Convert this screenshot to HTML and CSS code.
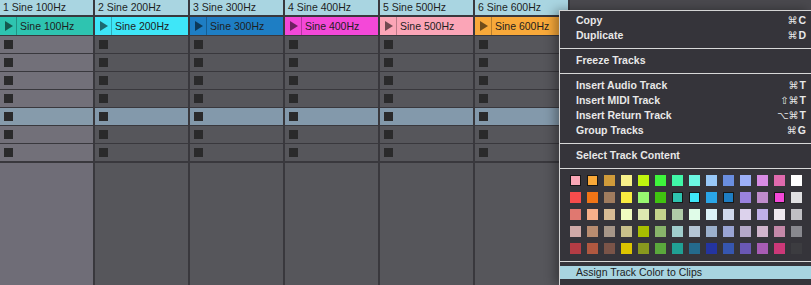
FILE: index.html
```html
<!DOCTYPE html>
<html lang="en">
<head>
    <meta charset="UTF-8">
    <title>Session View - Track Menu</title>
    <link rel="stylesheet" href="styles.css">
</head>
<body>
    <div class="session">
        <div class="track selected">
            <div class="track-head">1 Sine 100Hz</div>
            <div class="clip c-teal"><span class="play"><i></i></span><span class="clip-name">Sine 100Hz</span></div>
            <div class="slot"><b></b></div>
            <div class="slot"><b></b></div>
            <div class="slot"><b></b></div>
            <div class="slot"><b></b></div>
            <div class="slot hl"><b></b></div>
            <div class="slot"><b></b></div>
            <div class="slot last"><b></b></div>
            <div class="fill"></div>
        </div>
        <div class="track">
            <div class="track-head">2 Sine 200Hz</div>
            <div class="clip c-cyan"><span class="play"><i></i></span><span class="clip-name">Sine 200Hz</span></div>
            <div class="slot"><b></b></div>
            <div class="slot"><b></b></div>
            <div class="slot"><b></b></div>
            <div class="slot"><b></b></div>
            <div class="slot hl"><b></b></div>
            <div class="slot"><b></b></div>
            <div class="slot last"><b></b></div>
            <div class="fill"></div>
        </div>
        <div class="track">
            <div class="track-head">3 Sine 300Hz</div>
            <div class="clip c-blue"><span class="play"><i></i></span><span class="clip-name">Sine 300Hz</span></div>
            <div class="slot"><b></b></div>
            <div class="slot"><b></b></div>
            <div class="slot"><b></b></div>
            <div class="slot"><b></b></div>
            <div class="slot hl"><b></b></div>
            <div class="slot"><b></b></div>
            <div class="slot last"><b></b></div>
            <div class="fill"></div>
        </div>
        <div class="track">
            <div class="track-head">4 Sine 400Hz</div>
            <div class="clip c-magenta"><span class="play"><i></i></span><span class="clip-name">Sine 400Hz</span></div>
            <div class="slot"><b></b></div>
            <div class="slot"><b></b></div>
            <div class="slot"><b></b></div>
            <div class="slot"><b></b></div>
            <div class="slot hl"><b></b></div>
            <div class="slot"><b></b></div>
            <div class="slot last"><b></b></div>
            <div class="fill"></div>
        </div>
        <div class="track">
            <div class="track-head">5 Sine 500Hz</div>
            <div class="clip c-pink"><span class="play"><i></i></span><span class="clip-name">Sine 500Hz</span></div>
            <div class="slot"><b></b></div>
            <div class="slot"><b></b></div>
            <div class="slot"><b></b></div>
            <div class="slot"><b></b></div>
            <div class="slot hl"><b></b></div>
            <div class="slot"><b></b></div>
            <div class="slot last"><b></b></div>
            <div class="fill"></div>
        </div>
        <div class="track">
            <div class="track-head">6 Sine 600Hz</div>
            <div class="clip c-orange"><span class="play"><i></i></span><span class="clip-name">Sine 600Hz</span></div>
            <div class="slot"><b></b></div>
            <div class="slot"><b></b></div>
            <div class="slot"><b></b></div>
            <div class="slot"><b></b></div>
            <div class="slot hl"><b></b></div>
            <div class="slot"><b></b></div>
            <div class="slot last"><b></b></div>
            <div class="fill"></div>
        </div>
    </div>

    <div class="menu">
        <div class="menu-group first">
            <div class="menu-item"><span>Copy</span><span class="key"><em>⌘</em>C</span></div>
            <div class="menu-item"><span>Duplicate</span><span class="key"><em>⌘</em>D</span></div>
        </div>
        <div class="menu-group">
            <div class="menu-item"><span>Freeze Tracks</span></div>
        </div>
        <div class="menu-group">
            <div class="menu-item"><span>Insert Audio Track</span><span class="key"><em>⌘</em>T</span></div>
            <div class="menu-item"><span>Insert MIDI Track</span><span class="key"><em>⇧⌘</em>T</span></div>
            <div class="menu-item"><span>Insert Return Track</span><span class="key"><em>⌥⌘</em>T</span></div>
            <div class="menu-item"><span>Group Tracks</span><span class="key"><em>⌘</em>G</span></div>
        </div>
        <div class="menu-group">
            <div class="menu-item"><span>Select Track Content</span></div>
        </div>
        <div class="menu-group palette-group">
            <div class="palette" id="palette"></div>
        </div>
        <div class="menu-group last">
            <div class="menu-item active"><span>Assign Track Color to Clips</span></div>
        </div>
    </div>

    <script>
        const COLORS = [
            '#f9a6b5', '#f9a838', '#d09b3a', '#f7f08a', '#c0f50f', '#3ef43c', '#40f7a8', '#6cf7e3', '#98c8f8', '#6a8ee0', '#9caff8', '#d88be4', '#e06aae', '#ffffff',
            '#f84c4c', '#f27516', '#a07c5e', '#f8ec40', '#98f870', '#40c410', '#2ec4b0', '#3ee6f8', '#2aa6e8', '#1e7ec4', '#9a82e0', '#c08ccc', '#f448d8', '#e0e0e2',
            '#e07870', '#f8b08a', '#d8bc94', '#f0fcc0', '#dce8b0', '#c4d48c', '#b0cca8', '#e0fce8', '#dcf2f8', '#d0d8ec', '#dcd2ec', '#c0b0e8', '#eee8ee', '#c0c0c4',
            '#d0aaa8', '#b88c70', '#a69688', '#c8c08a', '#a8be00', '#88b46a', '#a0cccc', '#b4c4d4', '#9cb0cc', '#9aa4d4', '#b4a8c8', '#d0b4cc', '#c488a8', '#88888e',
            '#b43c44', '#b05840', '#7a5448', '#dcc400', '#88981e', '#5aa83c', '#20a094', '#246a8c', '#2434a0', '#3656b0', '#6a58b4', '#a85cb4', '#cc3878', '#3c3c40'
        ];
        // colours already used by the selected tracks get an outline
        const USED = [0, 1, 20, 21, 23, 26];

        const palette = document.getElementById('palette');
        COLORS.forEach((color, i) => {
            const swatch = document.createElement('span');
            swatch.className = USED.includes(i) ? 'swatch used' : 'swatch';
            swatch.style.background = color;
            palette.appendChild(swatch);
        });
    </script>
</body>
</html>
```

FILE: styles.css
```css
html, body {
    margin: 0;
    height: 100%;
    overflow: hidden;
}
body {
    background: #4a494e;
    font-family: 'Liberation Sans', 'DejaVu Sans', Arial, sans-serif;
    font-size: 10.5px;
    color: #202020;
}
.session {
    display: flex;
    gap: 2px;
    height: 100%;
    width: 568px;
    background: #39383d;
    border-right: 2px solid #39383d;
}
.track {
    width: 93px;
    display: flex;
    flex-direction: column;
}
.track-head {
    height: 15px;
    line-height: 15px;
    padding-left: 3px;
    margin-bottom: 2px;
    background: #a9d5e1;
    color: #1e1e1e;
    white-space: nowrap;
}
.clip {
    height: 18px;
    margin-bottom: 1px;
    display: flex;
    line-height: 18px;
}
.clip .play {
    width: 16px;
    border-right: 1px solid rgba(0,0,0,0.25);
    display: flex;
    align-items: center;
    justify-content: center;
}
.clip .play i {
    width: 0;
    height: 0;
    border-top: 5px solid transparent;
    border-bottom: 5px solid transparent;
    border-left: 8px solid rgba(0,0,0,0.55);
    margin-left: 1px;
}
.clip-name {
    padding-left: 3px;
    color: #1e1e1e;
    white-space: nowrap;
}
.c-teal { background: #2ec4b0; }
.c-cyan { background: #3ee6f8; }
.c-blue { background: #1e7ec4; }
.c-magenta { background: #f448d8; }
.c-pink { background: #fba5b7; }
.c-orange { background: #f8a93a; }

.slot {
    height: 17px;
    margin-bottom: 1px;
    background: #56565b;
    display: flex;
    align-items: center;
    padding-left: 4px;
}
.slot.last { margin-bottom: 2px; }
.slot b {
    width: 9px;
    height: 9px;
    background: #2a2a2b;
}
.slot.hl { background: #8399ab; }
.fill {
    flex: 1;
    background: #56565b;
}
.selected .slot { background: #727079; }
.selected .slot.hl { background: #869bab; }
.selected .fill { background: #6f6d77; }

/* context menu lies over the session, cut by the window edge */
.menu {
    position: absolute;
    left: 559px;
    top: 10px;
    right: 0;
    bottom: 0;
    overflow: hidden;
    background: #35343a;
    border: 1px solid #d4d4d4;
    border-right: none;
    border-bottom: none;
    box-shadow: -4px 0 10px rgba(0,0,0,0.35);
    font-weight: bold;
    color: #e8e8e8;
}
.menu-group {
    padding: 4px 0 5px;
    border-bottom: 1px solid #d8d8d8;
}
.menu-group.first { padding-top: 2px; }
.menu-group.last {
    border-bottom: none;
    padding-top: 4px;
}
.menu-item {
    display: flex;
    justify-content: space-between;
    height: 15px;
    line-height: 15px;
    padding: 0 5px 0 16px;
    white-space: nowrap;
}
.key em {
    font-style: normal;
    font-weight: normal;
    font-family: 'DejaVu Sans', sans-serif;
    font-size: 10px;
    margin-right: 1px;
}
.menu-item.active {
    height: 13px;
    line-height: 13px;
    background: #a8d4e0;
    color: #1c1c1c;
    font-weight: normal;
}
.palette-group {
    padding: 6px 0 7px 10px;
}
.palette {
    display: grid;
    grid-template-columns: repeat(14, 11px);
    grid-auto-rows: 11px;
    gap: 6px;
}
.swatch {
    display: block;
    box-sizing: border-box;
}
.swatch.used {
    border: 1px solid #161616;
}
```
